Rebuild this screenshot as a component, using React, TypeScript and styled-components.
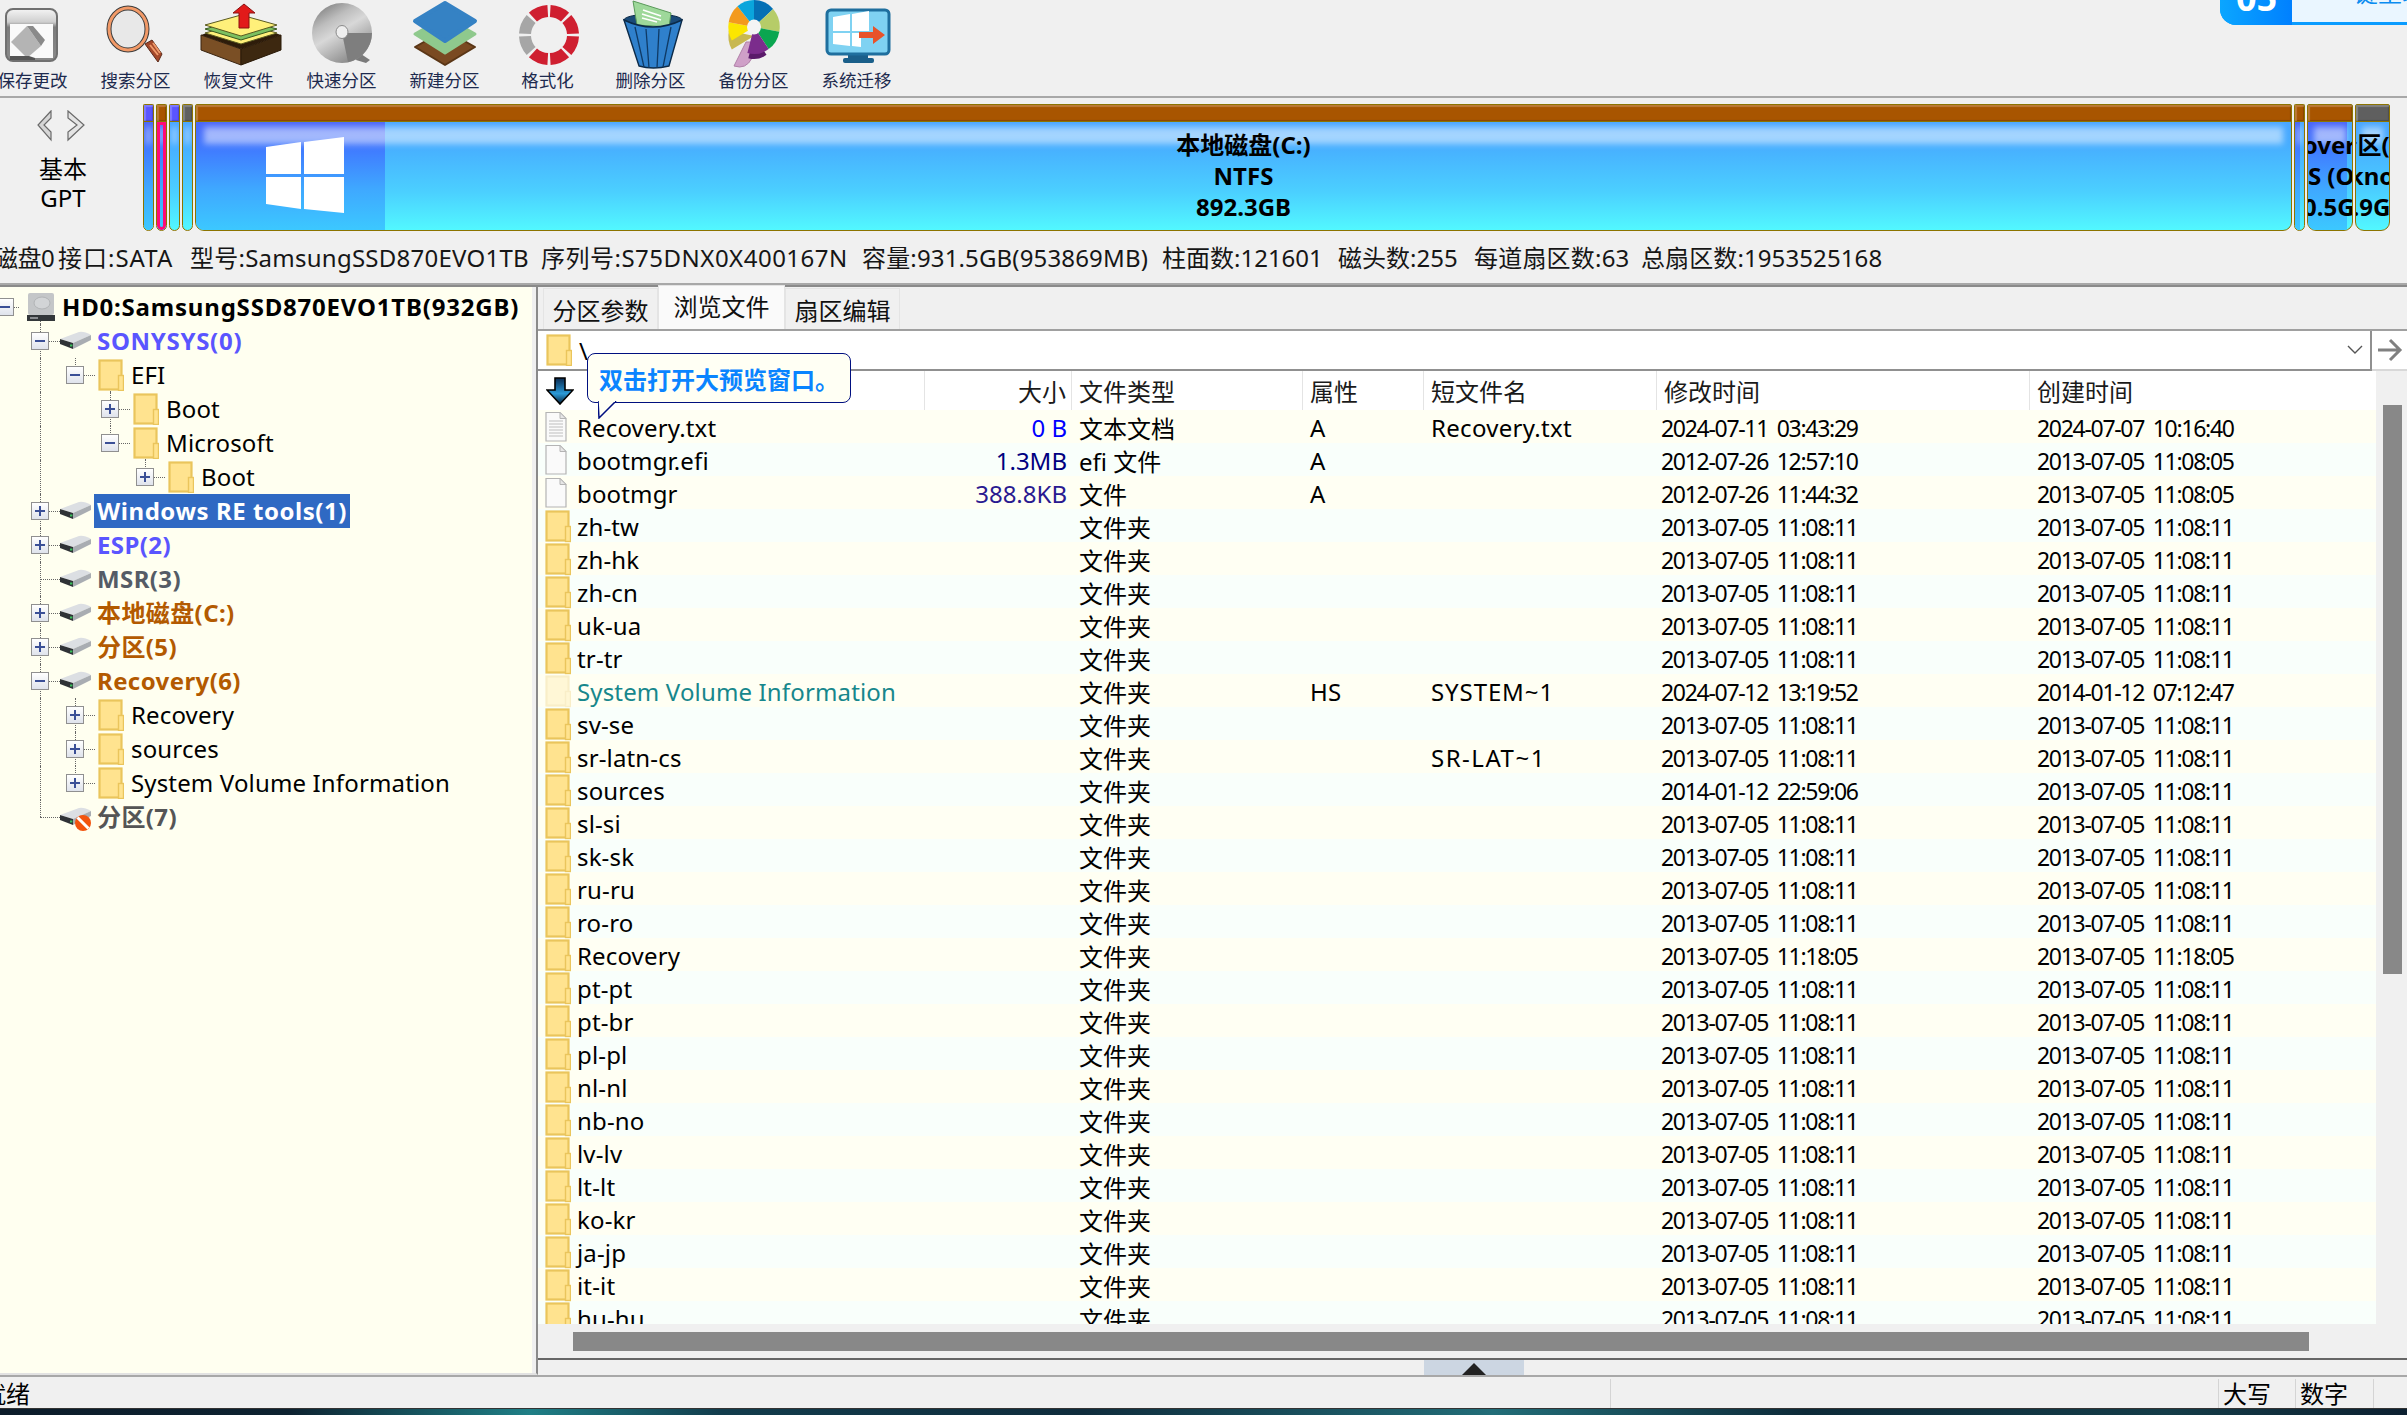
import React from "react";
import styled, { createGlobalStyle } from "styled-components";

const FONT = `"Noto Sans", "Noto Sans CJK SC", sans-serif`;

const Global = createGlobalStyle`
  html, body { margin: 0; padding: 0; width: 2407px; height: 1415px; overflow: hidden; background: #f0f0f0; }
  * { box-sizing: border-box; }
  body { font-family: ${FONT}; color: #000; }
`;

const Page = styled.div`
  position: relative;
  width: 2407px;
  height: 1415px;
  display: flex;
  flex-direction: column;
  overflow: hidden;
`;

/* ---------- toolbar ---------- */
const Toolbar = styled.div`
  height: 98px;
  flex: none;
  display: flex;
  margin-left: -19px;
  width: 2426px;
  border-bottom: 2px solid #a8a8a8;
`;
const ToolButton = styled.div`
  width: 103px;
  display: flex;
  flex-direction: column;
  align-items: center;
`;
const ToolIcon = styled.svg`
  width: 88px;
  height: 70px;
  flex: none;
`;
const ToolLabel = styled.div`
  font-size: 17.5px;
  line-height: 20px;
  color: #1d2a4e;
  white-space: nowrap;
`;

const Banner = styled.div`
  position: absolute;
  top: 0;
  right: 0;
  width: 187px;
  height: 25px;
  display: flex;
  overflow: hidden;
  border-bottom-left-radius: 16px;
  background: #0a9cff;
`;
const BannerBadge = styled.div`
  width: 72px;
  background: linear-gradient(90deg, #0ba6ff, #0080ff);
  color: #fff;
  font-weight: 700;
  font-size: 36px;
  line-height: 20px;
  padding-left: 16px;
  margin-top: -12px;
  height: 37px;
`;
const BannerText = styled.div`
  flex: 1;
  height: 22px;
  background: #eaf6ff;
  color: #0a8cf0;
  font-size: 24px;
  line-height: 22px;
  padding-left: 38px;
  overflow: hidden;
  white-space: nowrap;
`;
const BannerTextInner = styled.div`
  margin-top: -18px;
`;

/* ---------- disk map ---------- */
const DiskBar = styled.div`
  height: 133px;
  flex: none;
  display: flex;
  padding-top: 6px;
`;
const DiskNav = styled.div`
  width: 143px;
  flex: none;
  display: flex;
  flex-direction: column;
  align-items: center;
  padding-right: 17px;
`;
const NavArrows = styled.svg`
  width: 60px;
  height: 32px;
  margin-top: 6px;
  margin-left: 8px;
`;
const NavText = styled.div`
  font-size: 24px;
  line-height: 29px;
  &:first-of-type { margin-top: 12px; }
`;
const Segments = styled.div`
  display: flex;
  gap: 2px;
  height: 127px;
`;
const Segment = styled.div<{ $w: number }>`
  width: ${(p) => p.$w}px;
  flex: none;
  position: relative;
  display: flex;
  flex-direction: column;
  border: 1.5px solid #8c7400;
  border-radius: 2px 2px 9px 9px;
  overflow: hidden;
  background: linear-gradient(180deg, #4aa0ff 0%, #47acff 30%, #4bd0ff 70%, #52f8ff 100%);
`;
const SegHead = styled.div<{ $c: string }>`
  height: 17px;
  flex: none;
  background: ${(p) => p.$c};
  border-bottom: 1.5px solid #8c7400;
  box-shadow: inset 2px 2px 1px rgba(255, 255, 255, 0.22), inset -1px -1px 1px rgba(0, 0, 0, 0.18);
`;
const SegBody = styled.div`
  flex: 1;
  position: relative;
  display: flex;
  flex-direction: column;
  align-items: center;
  justify-content: center;
  overflow: hidden;
  padding-bottom: 1px;
`;
const SegUsed = styled.div<{ $w: string }>`
  position: absolute;
  left: 0;
  top: 0;
  bottom: 0;
  width: ${(p) => p.$w};
  background: linear-gradient(180deg, #4a66f8 0%, #407eff 28%, #3fa8ff 62%, #3cc8ff 100%);
`;
const SegGloss = styled.div<{ $inset: number }>`
  position: absolute;
  left: ${(p) => p.$inset}px;
  right: ${(p) => p.$inset}px;
  top: 5px;
  height: 17px;
  background: rgba(255, 255, 255, 0.5);
  filter: blur(3px);
`;
const SegSelected = styled.div`
  position: absolute;
  inset: 0;
  border: 3px solid #ff0a78;
  border-radius: 0 0 6px 6px;
`;
const SegLine = styled.div`
  position: relative;
  font-size: 24px;
  font-weight: 700;
  line-height: 31px;
  white-space: nowrap;
  flex: none;
`;
const WinLogo = styled.svg`
  position: absolute;
  left: 70px;
  top: 15px;
  width: 80px;
  height: 76px;
`;

const InfoBar = styled.div`
  height: 52px;
  flex: none;
  display: flex;
  align-items: center;
  padding-bottom: 2px;
  margin-left: -6px;
  font-size: 24px;
  white-space: nowrap;
  color: #161616;
`;
const InfoItem = styled.span<{ $w: number; $ls: number }>`
  display: inline-block;
  width: ${(p) => p.$w}px;
  letter-spacing: ${(p) => p.$ls}px;
`;

/* ---------- main ---------- */
const Main = styled.div`
  flex: 1;
  min-height: 0;
  display: flex;
  border-top: 2px solid #a8a8a8;
  border-bottom: 2px solid #a8a8a8;
`;
const TreePane = styled.div`
  width: 538px;
  flex: none;
  padding: 3px 0 0 0;
  background: #fffff0;
  border-top: 2px solid #8a8a8a;
  border-right: 2px solid #8a8a8a;
  border-bottom: 2px solid #e2e2e2;
  box-shadow: inset -4px 0 0 #f0f0f0;
  overflow: hidden;
`;
const TreeRow = styled.div`
  position: relative;
  height: 34px;
  display: flex;
  align-items: center;
  font-size: 24px;
  white-space: nowrap;
`;
const Guide = styled.i<{ $x: number; $part: "full" | "top" | "bottom" }>`
  position: absolute;
  left: ${(p) => p.$x}px;
  top: ${(p) => (p.$part === "bottom" ? "50%" : "0")};
  bottom: ${(p) => (p.$part === "top" ? "50%" : "0")};
  border-left: 1px dotted #666;
`;
const GuideH = styled.i<{ $x: number; $w: number }>`
  position: absolute;
  left: ${(p) => p.$x}px;
  width: ${(p) => p.$w}px;
  top: 50%;
  border-top: 1px dotted #666;
`;
const Expander = styled.span<{ $level: number }>`
  position: relative;
  margin-left: ${(p) => p.$level * 35 - 4}px;
  width: 18px;
  height: 18px;
  flex: none;
  border: 1px solid #909090;
  background: linear-gradient(180deg, #fff, #dfe3ec);
  display: flex;
  align-items: center;
  justify-content: center;
`;
const ExpanderGap = styled.span<{ $level: number }>`
  margin-left: ${(p) => p.$level * 35 - 4}px;
  width: 18px;
  flex: none;
`;
const RowIcon = styled.svg<{ $l: number; $r: number }>`
  position: relative;
  flex: none;
  margin-left: ${(p) => p.$l}px;
  margin-right: ${(p) => p.$r}px;
  display: block;
`;
const TreeLabel = styled.span<{ $color?: string; $bold?: boolean; $sel?: boolean; $ls?: number }>`
  position: relative;
  line-height: 34px;
  height: 34px;
  padding: 0 3px;
  color: ${(p) => p.$color || "#000"};
  font-weight: ${(p) => (p.$bold ? 700 : 400)};
  background: ${(p) => (p.$sel ? "#2f69c3" : "transparent")};
  letter-spacing: ${(p) => (p.$ls !== undefined ? p.$ls : p.$bold ? 0.4 : 0.15)}px;
`;

const RightPane = styled.div`
  flex: 1;
  min-width: 0;
  display: flex;
  flex-direction: column;
  border-top: 2px solid #8a8a8a;
`;
const Tabs = styled.div`
  height: 44px;
  flex: none;
  display: flex;
  align-items: flex-end;
  padding-left: 5px;
  border-bottom: 2px solid #a0a0a0;
`;
const Tab = styled.div<{ $active?: boolean }>`
  height: ${(p) => (p.$active ? 44 : 41)}px;
  padding: ${(p) => (p.$active ? "0 0 4px" : "0")};
  width: ${(p) => (p.$active ? 127 : 115)}px;
  background: ${(p) => (p.$active ? "#fafafa" : "#f0f0f0")};
  border: 1px solid #e4e4e4;
  border-bottom: none;
  font-size: 24px;
  display: flex;
  align-items: center;
  justify-content: center;
  color: #111;
`;
const AddressRow = styled.div`
  height: 40px;
  flex: none;
  display: flex;
`;
const AddressField = styled.div`
  flex: 1;
  display: flex;
  align-items: center;
  background: #fff;
  padding-left: 8px;
  border-bottom: 2px solid #909090;
  border-right: 2px solid #909090;
  font-size: 24px;
`;
const AddressText = styled.span`
  margin-left: 7px;
  flex: 1;
`;
const Chevron = styled.svg`
  width: 16px;
  height: 10px;
  margin-right: 7px;
`;
const GoButton = styled.div`
  width: 35px;
  flex: none;
  display: flex;
  align-items: center;
  justify-content: center;
  background: #fff;
  border-bottom: 2px solid #d8d8d8;
`;
const ListArea = styled.div`
  flex: 1;
  min-height: 0;
  display: flex;
`;
const ListColumn = styled.div`
  width: 1838px;
  flex: none;
  position: relative;
  display: flex;
  flex-direction: column;
  background: #fff;
`;
const COLS = "387px 147px 231px 121px 233px 373px 1fr";
const HeaderRow = styled.div`
  height: 39px;
  flex: none;
  display: grid;
  grid-template-columns: ${COLS};
  font-size: 24px;
  background: #fff;
  color: #1a1a1a;
`;
const HeaderCell = styled.div<{ $right?: boolean; $first?: boolean }>`
  display: flex;
  align-items: center;
  justify-content: ${(p) => (p.$right ? "flex-end" : "flex-start")};
  padding: ${(p) => (p.$right ? "0 5px 0 0" : "0 0 0 7px")};
  border-right: ${(p) => (p.$first ? "none" : "1px solid #e4e4e4")};
  white-space: nowrap;
`;
const SortArrow = styled.svg`
  width: 28px;
  height: 28px;
  margin-left: 1px;
`;
const Rows = styled.div`
  flex: 1;
  min-height: 0;
  overflow: hidden;
`;
const Row = styled.div<{ $even: boolean }>`
  height: 33px;
  display: grid;
  grid-template-columns: ${COLS};
  align-items: center;
  font-size: 24px;
  background: ${(p) => (p.$even ? "#f9fffb" : "#fffff3")};
  white-space: nowrap;
`;
const NameCell = styled.div<{ $color?: string }>`
  display: flex;
  align-items: center;
  padding-left: 7px;
  color: ${(p) => p.$color || "#000"};
  letter-spacing: 0.15px;
`;
const NameIcon = styled.svg`
  width: 26px;
  height: 33px;
  flex: none;
  margin-right: 6px;
`;
const SizeCell = styled.div<{ $color?: string }>`
  text-align: right;
  padding-right: 5px;
  color: ${(p) => p.$color || "#000"};
`;
const Cell = styled.div<{ $pad: number; $ls: number }>`
  padding-left: ${(p) => p.$pad}px;
  letter-spacing: ${(p) => p.$ls}px;
`;
const DateCell = styled.div<{ $pad: number }>`
  padding-left: ${(p) => p.$pad}px;
  font-size: 23px;
  letter-spacing: -1.3px;
  word-spacing: 4px;
`;
const VScroll = styled.div`
  flex: 1;
  background: #f0f0f0;
  padding: 34px 5px 0 7px;
`;
const VThumb = styled.div`
  height: 569px;
  background: #888;
`;
const HScroll = styled.div`
  height: 34px;
  flex: none;
  background: #f0f0f0;
  padding: 8px 0 0 35px;
`;
const HThumb = styled.div`
  width: 1736px;
  height: 19px;
  background: #888;
`;
const Collapse = styled.div`
  height: 17px;
  flex: none;
  border-top: 2px solid #666;
  padding-left: 886px;
`;
const CollapseButton = styled.div`
  width: 100px;
  height: 15px;
  background: #ccd6e2;
  display: flex;
  align-items: flex-end;
  justify-content: center;
`;
const CollapseTri = styled.svg`
  width: 24px;
  height: 12px;
  display: block;
`;

/* ---------- status ---------- */
const StatusBar = styled.div`
  height: 31px;
  flex: none;
  display: flex;
  font-size: 24px;
  line-height: 30px;
  white-space: nowrap;
  padding-top: 2px;
`;
const StatusMain = styled.div`
  width: 1611px;
  flex: none;
  overflow: hidden;
  border-right: 1px solid #d4d4d4;
`;
const StatusText = styled.span`
  display: block;
  margin-left: -18px;
`;
const StatusSpace = styled.div`
  width: 608px;
  flex: none;
  border-right: 1px solid #d4d4d4;
`;
const StatusKey = styled.div<{ $w: number }>`
  width: ${(p) => p.$w}px;
  flex: none;
  padding-left: 4px;
  border-right: 1px solid #d4d4d4;
`;
const Wallpaper = styled.div`
  height: 7px;
  flex: none;
  border-top: 1px solid #333;
  background: linear-gradient(90deg, #0c1c2a 0%, #0d2230 12%, #1f7f86 22%, #123c4c 30%, #0f2c3c 45%, #226d78 62%, #0d2a38 75%, #143c48 90%, #0c2030 100%);
`;

/* ---------- small drawings ---------- */
const Folder: React.FC<{ faded?: boolean }> = ({ faded }) => (
  <g opacity={faded ? 0.28 : 1}>
    <rect x="1.5" y="1.5" width="22" height="29" fill="#ffe38f" stroke="#eac55c" strokeWidth="2.2" />
    <rect x="20.5" y="16.5" width="5" height="15" fill="#ffe38f" stroke="#eac55c" strokeWidth="1.4" />
  </g>
);
const FileShape: React.FC<{ lines?: boolean }> = ({ lines }) => (
  <g>
    <path d="M1 1.5 H15 L21 7.5 V30 H1 Z" fill="#fafafa" stroke="#b4b4b4" strokeWidth="1.2" />
    <path d="M15 1.5 V7.5 H21 Z" fill="#e6e6e6" stroke="#b4b4b4" strokeWidth="1" />
    {lines && [10, 13, 16, 19, 22, 25].map((y) => <path key={y} d={`M4 ${y} H18`} stroke="#c8c8c8" strokeWidth="1.2" />)}
  </g>
);
const Drive: React.FC<{ blocked?: boolean }> = ({ blocked }) => (
  <RowIcon $l={10} $r={2} width="33" height="30" viewBox="0 0 33 30">
    <path d="M1 13 L20 6 Q25 5 32 9 L14 17 Z" fill="#dcdfe3" />
    <path d="M1 13 L14 17 V23 L1 18 Z" fill="#2f3236" />
    <path d="M14 17 L32 9 V14 L14 23 Z" fill="#a9adb2" />
    <rect x="11" y="18.5" width="2.4" height="2" fill="#39c05a" />
    {blocked && (
      <g>
        <circle cx="24" cy="21" r="8" fill="#f2540e" />
        <path d="M18.5 15.5 L29.5 26.5" stroke="#fff" strokeWidth="3" />
      </g>
    )}
  </RowIcon>
);
const Disk = () => (
  <RowIcon $l={13} $r={4} width="28" height="30" viewBox="0 0 28 30">
    <rect x="1" y="1" width="26" height="22" rx="2" fill="#c4c6c8" />
    <ellipse cx="15" cy="11" rx="8" ry="6" fill="#d2d4d6" stroke="#b2b4b6" />
    <rect x="0" y="23" width="28" height="6" fill="#33373a" />
    <rect x="3" y="25" width="8" height="2" fill="#8a8d90" />
  </RowIcon>
);
const Sign: React.FC<{ plus: boolean }> = ({ plus }) => (
  <svg width="12" height="12" viewBox="0 0 12 12">
    <path d="M1 6 H11" stroke="#3a4f96" strokeWidth="2" />
    {plus && <path d="M6 1 V11" stroke="#3a4f96" strokeWidth="2" />}
  </svg>
);

const polar = (cx: number, cy: number, rx: number, ry: number, deg: number) => {
  const a = ((deg - 90) * Math.PI) / 180;
  return `${(cx + rx * Math.cos(a)).toFixed(1)} ${(cy + ry * Math.sin(a)).toFixed(1)}`;
};
const ringSeg = (cx: number, cy: number, ro: number, ri: number, a: number, b: number) =>
  `M${polar(cx, cy, ro, ro, a)} A${ro} ${ro} 0 0 1 ${polar(cx, cy, ro, ro, b)} L${polar(cx, cy, ri, ri, b)} A${ri} ${ri} 0 0 0 ${polar(cx, cy, ri, ri, a)} Z`;
const pie = (cx: number, cy: number, r: number, a: number, b: number) =>
  `M${cx} ${cy} L${polar(cx, cy, r * 0.95, r, a)} A${r * 0.95} ${r} 0 0 1 ${polar(cx, cy, r * 0.95, r, b)} Z`;

const SaveIcon = () => (
  <ToolIcon viewBox="0 0 88 70">
    <defs>
      <linearGradient id="sv" x1="0" y1="0" x2="0" y2="1">
        <stop offset="0" stopColor="#f4f4f4" />
        <stop offset="0.25" stopColor="#cfcfcf" />
        <stop offset="0.35" stopColor="#7c7c7c" />
        <stop offset="1" stopColor="#8a8a8a" />
      </linearGradient>
    </defs>
    <rect x="17" y="9" width="51" height="52" rx="7" fill="url(#sv)" stroke="#707070" strokeWidth="2" />
    <path d="M21 24 H64 V58 H21 Z" fill="#fafafa" />
    <path d="M22 42 L38 26 L52 46 L38 58 Z" fill="#b4b4b4" />
    <path d="M38 26 L52 46 L56 40 L44 26 Z" fill="#8a8a8a" />
    <path d="M21 56 H40 L46 58 V60 H21 Z" fill="#555" />
  </ToolIcon>
);
const SearchIcon = () => (
  <ToolIcon viewBox="0 0 88 70">
    <path d="M53 44 L60 40 L70 54 L66 62 Z" fill="#a4482a" stroke="#5a2a1a" />
    <path d="M58 45 L66 55 M61 43 L68 53" stroke="#ef9a6a" strokeWidth="2" />
    <ellipse cx="36" cy="29" rx="19" ry="21" fill="#e8e8e8" stroke="#3c3c3c" strokeWidth="5" />
    <ellipse cx="36" cy="29" rx="19" ry="21" fill="none" stroke="#f29a68" strokeWidth="3" />
  </ToolIcon>
);
const RestoreIcon = () => (
  <ToolIcon viewBox="0 0 88 70">
    <path d="M6 35 L46 49 V65 L6 50 Z" fill="#7a4f25" stroke="#3a2410" />
    <path d="M46 49 L86 35 V50 L46 65 Z" fill="#3d2810" stroke="#2a1a08" />
    <path d="M6 35 L46 21 L86 35 L46 49 Z" fill="#2e1c0a" />
    <path d="M10 33 L46 23 L82 33 L46 44 Z" fill="#fff07a" stroke="#5a5a20" />
    <path d="M10 29 L46 19 L82 29 L46 40 Z" fill="#7cc060" stroke="#3a5a20" />
    <path d="M10 25 L46 15 L82 25 L46 36 Z" fill="#fff07a" stroke="#5a5a20" />
    <path d="M44 28 V13 H38 L49 4 L60 13 H54 V28 Z" fill="#e21a1a" stroke="#8a1010" />
  </ToolIcon>
);
const QuickIcon = () => (
  <ToolIcon viewBox="0 0 88 70">
    <defs>
      <linearGradient id="dk" x1="0" y1="0" x2="0.6" y2="1">
        <stop offset="0" stopColor="#6c6c6c" />
        <stop offset="0.35" stopColor="#bdbdbd" />
        <stop offset="0.55" stopColor="#d8d8d8" />
        <stop offset="1" stopColor="#8a8a8a" />
      </linearGradient>
    </defs>
    <path d="M60 52 L72 60 L68 63 L58 60 Z" fill="#7a7a7a" />
    <ellipse cx="44" cy="33" rx="30" ry="30" fill="url(#dk)" />
    <path d="M44 33 L74 33 A30 30 0 0 1 50 62 Z" fill="#7e7e7e" />
    <ellipse cx="44" cy="32" rx="6" ry="6.5" fill="#eee" stroke="#8a8a8a" />
  </ToolIcon>
);
const NewIcon = () => (
  <ToolIcon viewBox="0 0 88 70">
    <path d="M44 30 L74 47 L44 65 L14 47 Z" fill="#7a4a22" stroke="#5a3616" strokeLinejoin="round" strokeWidth="2" />
    <path d="M44 17 L74 34 L44 53 L14 34 Z" fill="#8fc98d" stroke="#8fc98d" strokeLinejoin="round" strokeWidth="3" />
    <path d="M44 3 L74 21 L44 41 L14 21 Z" fill="#3582c4" stroke="#3582c4" strokeLinejoin="round" strokeWidth="4" />
  </ToolIcon>
);
const FormatIcon = () => {
  const gray = [225, 270];
  const starts = [0, 45, 90, 135, 180, 225, 270, 315];
  return (
    <ToolIcon viewBox="0 0 88 70">
      {starts.map((s) => (
        <path
          key={s}
          d={ringSeg(45, 35, 30, 18, s + 3, s + 42)}
          fill={gray.includes(s) ? "#a6a6a6" : "#cf1f30"}
        />
      ))}
    </ToolIcon>
  );
};
const DeleteIcon = () => (
  <ToolIcon viewBox="0 0 88 70">
    <ellipse cx="46" cy="20" rx="29" ry="6" fill="#1a4a78" stroke="#0c2a48" />
    <path d="M26 1 L64 13 L62 27 L30 25 Z" fill="#9ed89a" stroke="#5a9a5a" />
    <path d="M36 10 L54 16 M35 14 L54 20 M35 18 L50 22" stroke="#fff" strokeWidth="1.6" />
    <path d="M17 20 Q46 34 75 20 L62 66 Q46 70 32 66 Z" fill="#2f80cc" stroke="#0c2a48" strokeWidth="1.4" />
    <path d="M28 27 L37 67 M39 29 L42 68 M52 29 L50 68 M64 27 L56 67" stroke="#0f3a66" strokeWidth="1.3" />
  </ToolIcon>
);
const BackupIcon = () => {
  const slices: [number, number, string][] = [
    [0, 48, "#0570b5"],
    [48, 100, "#b6cc68"],
    [100, 145, "#0aa650"],
    [145, 195, "#7b2c8c"],
    [240, 280, "#fbe600"],
    [280, 320, "#f39a1d"],
    [320, 360, "#0aa5dc"],
  ];
  return (
    <ToolIcon viewBox="0 0 88 70">
      <path d="M36 42 L24 66 Q36 70 42 58 L42 42 Z" fill="#cfa0c8" stroke="#b080a8" />
      <path d={pie(44, 30, 27, 240, 282)} fill="#c8b850" transform="translate(0 6)" />
      <path d={pie(58, 28, 23, 145, 195)} fill="#5a1a6a" transform="translate(-14 8)" />
      {slices.map(([a, b, c]) => (
        <path key={a} d={pie(44, 27, 27, a, b)} fill={c} />
      ))}
      <ellipse cx="44" cy="27" rx="7" ry="7.5" fill="#f4f4f4" />
    </ToolIcon>
  );
};
const MigrateIcon = () => (
  <ToolIcon viewBox="0 0 88 70">
    <rect x="35" y="51" width="20" height="8" fill="#1a5f8a" />
    <rect x="30" y="58" width="31" height="5" rx="2" fill="#1a5f8a" />
    <rect x="14" y="10" width="62" height="44" rx="4" fill="#7fd2f2" stroke="#1f6f9e" strokeWidth="3" />
    <path d="M20 17 L37 14 V31 H20 Z M39 14 L56 11 V31 H39 Z M20 33 H37 V46 L20 44 Z M39 33 H48 V47 L39 46 Z" fill="#fff" />
    <path d="M46 32 H60 V26 L72 35 L60 44 V38 H46 Z" fill="#e8532a" />
  </ToolIcon>
);

const tools: [React.ComponentType, string][] = [
  [SaveIcon, "保存更改"],
  [SearchIcon, "搜索分区"],
  [RestoreIcon, "恢复文件"],
  [QuickIcon, "快速分区"],
  [NewIcon, "新建分区"],
  [FormatIcon, "格式化"],
  [DeleteIcon, "删除分区"],
  [BackupIcon, "备份分区"],
  [MigrateIcon, "系统迁移"],
];

/* ---------- data ---------- */
const BLUE = "#5a55ff";
const BROWN = "#b35a00";
const GRAY = "#555c66";
type G = [number, "full" | "top" | "bottom"];
type TreeItem = {
  level: number;
  label: string;
  kind: "disk" | "drive" | "folder" | "blocked";
  exp?: "plus" | "minus";
  color?: string;
  bold?: boolean;
  sel?: boolean;
  ls?: number;
  guides: G[];
};
const L: G = [40, "full"];
const tree: TreeItem[] = [
  { level: 0, label: "HD0:SamsungSSD870EVO1TB(932GB)", kind: "disk", exp: "minus", bold: true, ls: 0.8, guides: [[40, "bottom"]] },
  { level: 1, label: "SONYSYS(0)", kind: "drive", exp: "minus", color: BLUE, bold: true, ls: 0.7, guides: [L] },
  { level: 2, label: "EFI", kind: "folder", exp: "minus", guides: [L, [75, "top"], [110, "bottom"]] },
  { level: 3, label: "Boot", kind: "folder", exp: "plus", guides: [L, [110, "full"]] },
  { level: 3, label: "Microsoft", kind: "folder", exp: "minus", guides: [L, [110, "top"], [145, "bottom"]] },
  { level: 4, label: "Boot", kind: "folder", exp: "plus", guides: [L, [145, "top"]] },
  { level: 1, label: "Windows RE tools(1)", kind: "drive", exp: "plus", color: "#fff", bold: true, sel: true, ls: 0.55, guides: [L] },
  { level: 1, label: "ESP(2)", kind: "drive", exp: "plus", color: BLUE, bold: true, guides: [L] },
  { level: 1, label: "MSR(3)", kind: "drive", color: GRAY, bold: true, guides: [L] },
  { level: 1, label: "本地磁盘(C:)", kind: "drive", exp: "plus", color: BROWN, bold: true, guides: [L] },
  { level: 1, label: "分区(5)", kind: "drive", exp: "plus", color: BROWN, bold: true, guides: [L] },
  { level: 1, label: "Recovery(6)", kind: "drive", exp: "minus", color: BROWN, bold: true, guides: [L] },
  { level: 2, label: "Recovery", kind: "folder", exp: "plus", guides: [L, [75, "full"]] },
  { level: 2, label: "sources", kind: "folder", exp: "plus", guides: [L, [75, "full"]] },
  { level: 2, label: "System Volume Information", kind: "folder", exp: "plus", guides: [L, [75, "top"]] },
  { level: 1, label: "分区(7)", kind: "blocked", color: "#555", bold: true, guides: [[40, "top"]] },
];

const D = "2013-07-05 11:08:11";
type FileRow = {
  name: string;
  size?: string;
  sizeColor?: string;
  type: string;
  attr?: string;
  short?: string;
  shortLs?: number;
  mod: string;
  created: string;
  icon: "txt" | "file" | "folder" | "faded";
  color?: string;
};
const simple = (name: string, extra: Partial<FileRow> = {}): FileRow => ({
  name,
  type: "文件夹",
  mod: D,
  created: D,
  icon: "folder",
  ...extra,
});
const files: FileRow[] = [
  { name: "Recovery.txt", size: "0 B", sizeColor: "#0000ff", type: "文本文档", attr: "A", short: "Recovery.txt", shortLs: 0.3, mod: "2024-07-11 03:43:29", created: "2024-07-07 10:16:40", icon: "txt" },
  { name: "bootmgr.efi", size: "1.3MB", sizeColor: "#000080", type: "efi 文件", attr: "A", mod: "2012-07-26 12:57:10", created: "2013-07-05 11:08:05", icon: "file" },
  { name: "bootmgr", size: "388.8KB", sizeColor: "#2a1a90", type: "文件", attr: "A", mod: "2012-07-26 11:44:32", created: "2013-07-05 11:08:05", icon: "file" },
  simple("zh-tw"),
  simple("zh-hk"),
  simple("zh-cn"),
  simple("uk-ua"),
  simple("tr-tr"),
  simple("System Volume Information", { attr: "HS", short: "SYSTEM~1", shortLs: 0.9, mod: "2024-07-12 13:19:52", created: "2014-01-12 07:12:47", icon: "faded", color: "#17878c" }),
  simple("sv-se"),
  simple("sr-latn-cs", { short: "SR-LAT~1", shortLs: 1.5 }),
  simple("sources", { mod: "2014-01-12 22:59:06" }),
  simple("sl-si"),
  simple("sk-sk"),
  simple("ru-ru"),
  simple("ro-ro"),
  simple("Recovery", { mod: "2013-07-05 11:18:05", created: "2013-07-05 11:18:05" }),
  simple("pt-pt"),
  simple("pt-br"),
  simple("pl-pl"),
  simple("nl-nl"),
  simple("nb-no"),
  simple("lv-lv"),
  simple("lt-lt"),
  simple("ko-kr"),
  simple("ja-jp"),
  simple("it-it"),
  simple("hu-hu"),
];

const Bubble = styled.div`
  position: absolute;
  left: 49px;
  top: -18px;
  width: 264px;
  height: 50px;
  background: #fffff4;
  border: 1.5px solid #000f80;
  border-radius: 8px;
  color: #0a84ff;
  font-weight: 700;
  font-size: 24px;
  line-height: 51px;
  padding-left: 11px;
  white-space: nowrap;
  z-index: 3;
`;
const BubbleTail = styled.svg`
  position: absolute;
  left: 10px;
  top: 47px;
  width: 20px;
  height: 18px;
`;

const segments: { w: number; c: string; sel?: boolean; used?: string; lines?: string[]; gloss?: number }[] = [
  { w: 11, c: "#5a55ff", used: "100%", gloss: 2 },
  { w: 11, c: "#a85500", sel: true, used: "100%", gloss: 2 },
  { w: 11, c: "#5a55ff", gloss: 2 },
  { w: 11, c: "#5f5f5f", gloss: 2 },
];
const tail: typeof segments = [
  { w: 11, c: "#a85500", used: "50%", gloss: 2 },
  { w: 46, c: "#a85500", used: "88%", gloss: 6, lines: ["Recovery(6)", "NTFS (OEM)", "10.5GB"] },
  { w: 35, c: "#5f5f5f", gloss: 6, lines: ["分区(7)", "Unknown", "0.9GB"] },
];

const renderSeg = (s: (typeof segments)[number], i: number) => (
  <Segment key={i} $w={s.w}>
    <SegHead $c={s.c} />
    <SegBody>
      {s.used && <SegUsed $w={s.used} />}
      <SegGloss $inset={s.gloss ?? 2} />
      {s.sel && <SegSelected />}
      {s.lines?.map((l) => <SegLine key={l}>{l}</SegLine>)}
    </SegBody>
  </Segment>
);

export default function App() {
  return (
    <Page>
      <Global />
      <Toolbar>
        {tools.map(([Icon, label]) => (
          <ToolButton key={label}>
            <Icon />
            <ToolLabel>{label}</ToolLabel>
          </ToolButton>
        ))}
      </Toolbar>
      <Banner>
        <BannerBadge>05</BannerBadge>
        <BannerText>
          <BannerTextInner>一键重装</BannerTextInner>
        </BannerText>
      </Banner>

      <DiskBar>
        <DiskNav>
          <NavArrows viewBox="0 0 60 32">
            <path d="M14 1 L1 15 L14 30 V22 L7 15 L14 8 Z" fill="#d6d6d6" stroke="#6a6a6a" strokeWidth="1.2" />
            <path d="M31 1 L47 15 L31 30 V22 L40 15 L31 8 Z" fill="#e4e4e4" stroke="#6a6a6a" strokeWidth="1.2" />
          </NavArrows>
          <NavText>基本</NavText>
          <NavText>GPT</NavText>
        </DiskNav>
        <Segments>
          {segments.map(renderSeg)}
          <Segment $w={2097}>
            <SegHead $c="#a85500" />
            <SegBody>
              <SegUsed $w="189px" />
              <SegGloss $inset={8} />
              <WinLogo viewBox="0 0 80 76">
                <path d="M0 10 L35 5 V37 H0 Z M38 5 L78 0 V37 H38 Z M0 40 H35 V72 L0 67 Z M38 40 H78 V76 L38 72 Z" fill="#fff" />
              </WinLogo>
              <SegLine>本地磁盘(C:)</SegLine>
              <SegLine>NTFS</SegLine>
              <SegLine>892.3GB</SegLine>
            </SegBody>
          </Segment>
          {tail.map(renderSeg)}
        </Segments>
      </DiskBar>

      <InfoBar>
        <InfoItem $w={64} $ls={-0.5}>磁盘0</InfoItem>
        <InfoItem $w={132} $ls={1}>接口:SATA</InfoItem>
        <InfoItem $w={351} $ls={0.25}>型号:SamsungSSD870EVO1TB</InfoItem>
        <InfoItem $w={321} $ls={0.5}>序列号:S75DNX0X400167N</InfoItem>
        <InfoItem $w={300} $ls={0.15}>容量:931.5GB(953869MB)</InfoItem>
        <InfoItem $w={176} $ls={0}>柱面数:121601</InfoItem>
        <InfoItem $w={136} $ls={0}>磁头数:255</InfoItem>
        <InfoItem $w={167} $ls={0.2}>每道扇区数:63</InfoItem>
        <InfoItem $w={260} $ls={0.1}>总扇区数:1953525168</InfoItem>
      </InfoBar>

      <Main>
        <TreePane>
          {tree.map((t, i) => {
            const cx = t.level * 35 + 5;
            return (
              <TreeRow key={i}>
                {t.guides.map(([x, part], j) => (
                  <Guide key={j} $x={x} $part={part} />
                ))}
                <GuideH $x={cx} $w={t.level === 0 ? 14 : 20} />
                {t.exp ? (
                  <Expander $level={t.level}>
                    <Sign plus={t.exp === "plus"} />
                  </Expander>
                ) : (
                  <ExpanderGap $level={t.level} />
                )}
                {t.kind === "disk" && <Disk />}
                {t.kind === "drive" && <Drive />}
                {t.kind === "blocked" && <Drive blocked />}
                {t.kind === "folder" && (
                  <RowIcon $l={14} $r={4} width="26" height="32" viewBox="0 0 26 32">
                    <Folder />
                  </RowIcon>
                )}
                <TreeLabel $color={t.color} $bold={t.bold} $sel={t.sel} $ls={t.ls}>
                  {t.label}
                </TreeLabel>
              </TreeRow>
            );
          })}
        </TreePane>

        <RightPane>
          <Tabs>
            <Tab>分区参数</Tab>
            <Tab $active>浏览文件</Tab>
            <Tab>扇区编辑</Tab>
          </Tabs>
          <AddressRow>
            <AddressField>
              <svg width="26" height="32" viewBox="0 0 26 32">
                <Folder />
              </svg>
              <AddressText>\</AddressText>
              <Chevron viewBox="0 0 16 10">
                <path d="M1 1 L8 8 L15 1" fill="none" stroke="#555" strokeWidth="1.4" />
              </Chevron>
            </AddressField>
            <GoButton>
              <svg width="26" height="24" viewBox="0 0 26 24">
                <path d="M1 12 H23 M13 2 L23 12 L13 22" fill="none" stroke="#808080" strokeWidth="3" />
              </svg>
            </GoButton>
          </AddressRow>
          <ListArea>
            <ListColumn>
              <HeaderRow>
                <HeaderCell>
                  <SortArrow viewBox="0 0 28 28">
                    <defs>
                      <linearGradient id="ar" x1="0" y1="0" x2="0" y2="1">
                        <stop offset="0" stopColor="#0a2a50" />
                        <stop offset="0.6" stopColor="#2a9ad8" />
                        <stop offset="1" stopColor="#062038" />
                      </linearGradient>
                    </defs>
                    <path d="M9 1 H19 V13 H27 L14 27 L1 13 H9 Z" fill="url(#ar)" stroke="#000" strokeWidth="1.6" />
                  </SortArrow>
                </HeaderCell>
                <HeaderCell $right>大小</HeaderCell>
                <HeaderCell>文件类型</HeaderCell>
                <HeaderCell>属性</HeaderCell>
                <HeaderCell>短文件名</HeaderCell>
                <HeaderCell>修改时间</HeaderCell>
                <HeaderCell $first>创建时间</HeaderCell>
              </HeaderRow>
              <Bubble>
                双击打开大预览窗口。
                <BubbleTail viewBox="0 0 20 18">
                  <path d="M0 0 L1 17 L18 0" fill="#fffff4" stroke="#000f80" strokeWidth="1.5" />
                  <path d="M1 0 H17" stroke="#fffff4" strokeWidth="2" />
                </BubbleTail>
              </Bubble>
              <Rows>
                {files.map((f, i) => (
                  <Row key={f.name + i} $even={i % 2 === 1}>
                    <NameCell $color={f.color}>
                      <NameIcon viewBox="0 0 26 33">
                        {f.icon === "folder" && <Folder />}
                        {f.icon === "faded" && <Folder faded />}
                        {f.icon === "txt" && <FileShape lines />}
                        {f.icon === "file" && <FileShape />}
                      </NameIcon>
                      {f.name}
                    </NameCell>
                    <SizeCell $color={f.sizeColor}>{f.size}</SizeCell>
                    <Cell $pad={7} $ls={0}>{f.type}</Cell>
                    <Cell $pad={7} $ls={0.3}>{f.attr}</Cell>
                    <Cell $pad={7} $ls={f.shortLs ?? 0}>{f.short}</Cell>
                    <DateCell $pad={4}>{f.mod}</DateCell>
                    <DateCell $pad={7}>{f.created}</DateCell>
                  </Row>
                ))}
              </Rows>
            </ListColumn>
            <VScroll>
              <VThumb />
            </VScroll>
          </ListArea>
          <HScroll>
            <HThumb />
          </HScroll>
          <Collapse>
            <CollapseButton>
              <CollapseTri viewBox="0 0 24 12">
                <path d="M12 0 L24 12 H0 Z" fill="#222" />
              </CollapseTri>
            </CollapseButton>
          </Collapse>
        </RightPane>
      </Main>

      <StatusBar>
        <StatusMain>
          <StatusText>就绪</StatusText>
        </StatusMain>
        <StatusSpace />
        <StatusKey $w={77}>大写</StatusKey>
        <StatusKey $w={78}>数字</StatusKey>
      </StatusBar>
      <Wallpaper />
    </Page>
  );
}
